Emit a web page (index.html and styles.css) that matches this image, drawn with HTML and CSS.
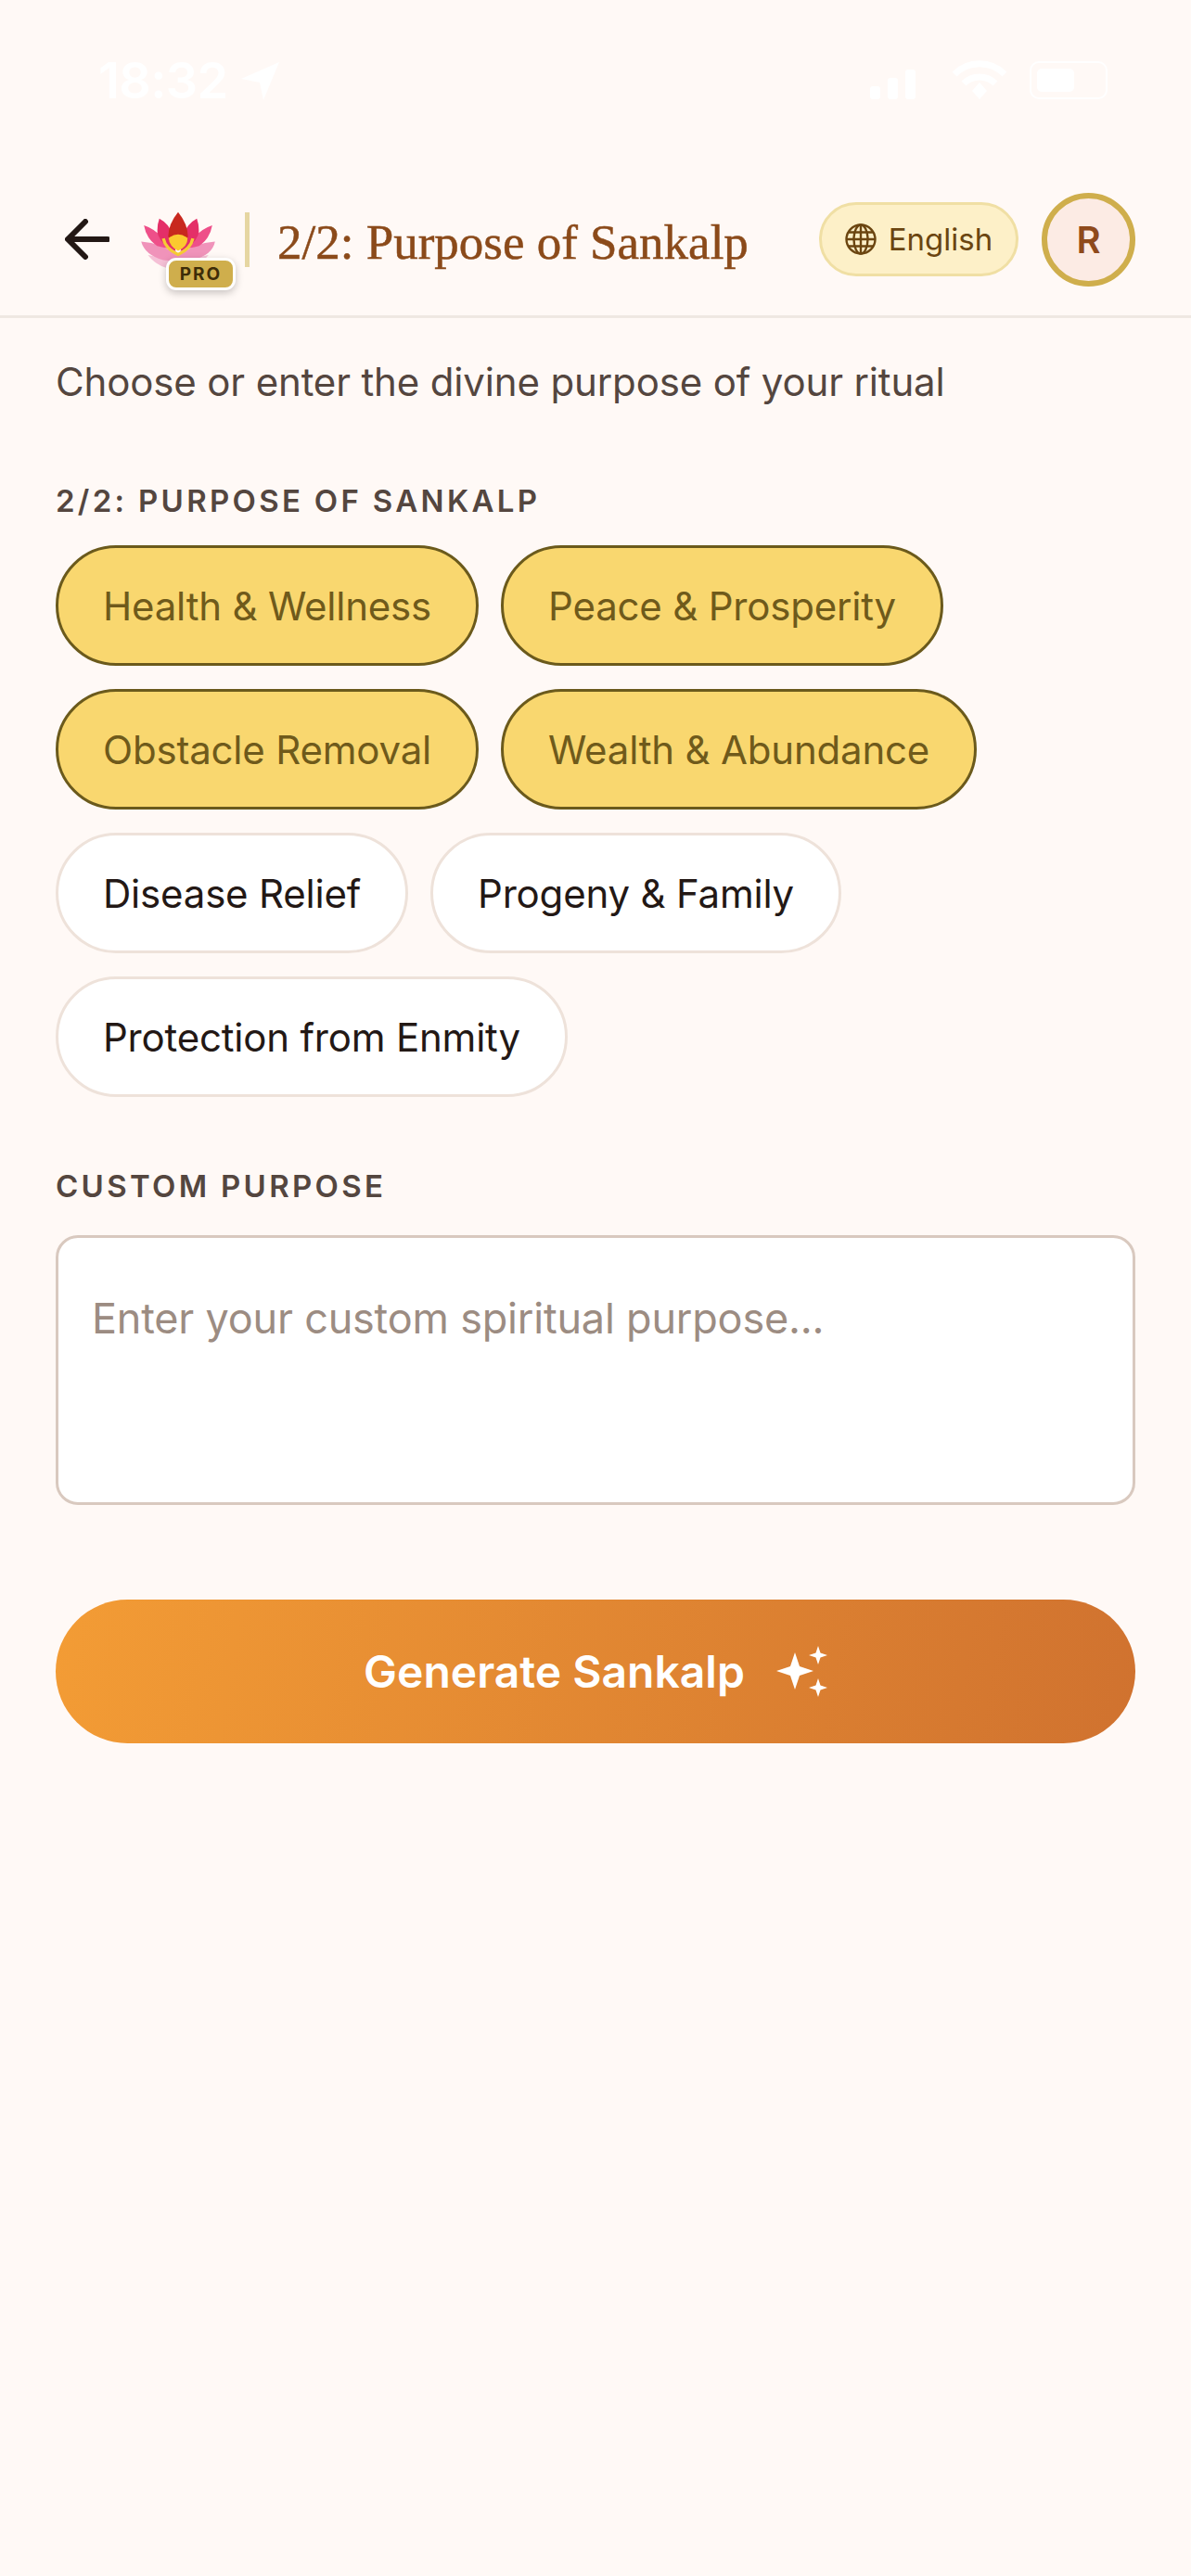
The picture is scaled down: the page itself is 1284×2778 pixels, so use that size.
FILE: index.html
```html
<!DOCTYPE html>
<html lang="en">
<head>
    <meta charset="UTF-8">
    <meta name="viewport" content="width=device-width, initial-scale=1.0">
    <title>Purpose of Sankalp</title>
    <link rel="stylesheet" href="styles.css">
</head>
<body>
    <div class="status-bar">
        <div class="status-left">
            <span class="status-time">18:32</span>
            <svg class="status-arrow" viewBox="0 0 41 41"><path d="M41 0 L24 41 L20 22 L0 18 Z" fill="#fff"/></svg>
        </div>
        <div class="status-right">
            <svg class="status-signal" viewBox="0 0 50 32">
                <rect x="0" y="18" width="11" height="14" rx="3" fill="#fff"/>
                <rect x="19" y="9" width="11" height="23" rx="3" fill="#fff"/>
                <rect x="38" y="0" width="11" height="32" rx="3" fill="#fff"/>
            </svg>
            <svg class="status-wifi" viewBox="0 0 60 42">
                <path d="M3 15 A38 38 0 0 1 57 15" fill="none" stroke="#fff" stroke-width="7"/>
                <path d="M13 25 A24 24 0 0 1 47 25" fill="none" stroke="#fff" stroke-width="7"/>
                <path d="M22 33 L30 24 L38 33 L30 42 Z" fill="#fff"/>
            </svg>
            <div class="status-battery"><div class="status-battery-fill"></div></div>
        </div>
    </div>

    <header class="header">
        <button class="back-btn" aria-label="Back">
            <svg viewBox="0 0 48 44" width="48" height="44"><path d="M46 22 H4 M22 3 L3 22 L22 41" fill="none" stroke="#231815" stroke-width="6" stroke-linecap="round" stroke-linejoin="round"/></svg>
        </button>
        <div class="logo">
            <svg viewBox="330 110 246 190" width="82" height="63">
                <path d="M355 252 Q410 262 453 275 Q496 262 552 252 Q520 292 453 300 Q390 298 355 252 Z" fill="#f5c0d6"/>
                <path d="M333 208 Q400 212 453 255 Q506 212 573 208 Q565 252 500 268 Q453 275 405 268 Q345 252 333 208 Z" fill="#f093ba"/>
                <path d="M342 155 Q395 172 425 232 L385 222 Q350 200 342 155 Z" fill="#ee4f89"/>
                <path d="M564 155 Q511 172 481 232 L521 222 Q556 200 564 155 Z" fill="#ee4f89"/>
                <path d="M392 133 Q425 150 438 190 L445 240 Q398 222 386 180 Q384 155 392 133 Z" fill="#e42f68"/>
                <path d="M514 133 Q481 150 468 190 L461 240 Q508 222 520 180 Q522 155 514 133 Z" fill="#e42f68"/>
                <path d="M453 112 Q484 150 485 190 Q480 225 453 235 Q426 225 421 190 Q422 150 453 112 Z" fill="#c8281e"/>
                <path d="M405 198 Q412 232 453 250 Q494 232 501 198" fill="none" stroke="#f6cb35" stroke-width="10"/>
                <path d="M422 197 Q453 172 484 197 Q484 225 453 238 Q425 225 422 197 Z" fill="#fbc92f"/>
            </svg>
            <span class="pro-badge">PRO</span>
        </div>
        <div class="header-divider"></div>
        <h1 class="header-title">2/2: Purpose of Sankalp</h1>
        <button class="lang-pill">
            <svg viewBox="0 0 34 34" width="34" height="34" fill="none" stroke="#6b4510" stroke-width="2.4">
                <circle cx="17" cy="17" r="15.5"/>
                <ellipse cx="17" cy="17" rx="7.5" ry="15.5"/>
                <path d="M17 1.5 V32.5 M1.5 17 H32.5 M4 9.5 H30 M4 24.5 H30"/>
            </svg>
            <span>English</span>
        </button>
        <div class="avatar">R</div>
    </header>

    <main class="content">
        <p class="intro">Choose or enter the divine purpose of your ritual</p>

        <h2 class="section-label">2/2: Purpose of Sankalp</h2>
        <div class="chips">
            <button class="chip selected">Health &amp; Wellness</button>
            <button class="chip selected">Peace &amp; Prosperity</button>
            <button class="chip selected">Obstacle Removal</button>
            <button class="chip selected">Wealth &amp; Abundance</button>
            <button class="chip">Disease Relief</button>
            <button class="chip">Progeny &amp; Family</button>
            <button class="chip">Protection from Enmity</button>
        </div>

        <h2 class="section-label custom-label">Custom Purpose</h2>
        <textarea class="custom-input" placeholder="Enter your custom spiritual purpose..."></textarea>

        <button class="generate-btn">
            <span>Generate Sankalp</span>
            <svg viewBox="0 0 55 55" width="55" height="55" fill="#fff">
                <path d="M20 7 L25 22 L40 27 L25 32 L20 47 L15 32 L0 27 L15 22 Z"/>
                <path d="M45 0 L47.5 7.5 L55 10 L47.5 12.5 L45 20 L42.5 12.5 L35 10 L42.5 7.5 Z"/>
                <path d="M45 35 L47.5 42.5 L55 45 L47.5 47.5 L45 55 L42.5 47.5 L35 45 L42.5 42.5 Z"/>
            </svg>
        </button>
    </main>
</body>
</html>
```

FILE: styles.css
```css
* {
    box-sizing: border-box;
}
body {
    margin: 0;
    min-height: 2778px;
    background-color: #fff9f6;
    font-family: Inter, "Liberation Sans", sans-serif;
    color: #231815;
}
button {
    font-family: inherit;
    cursor: pointer;
}

/* status bar, white on the page colour */
.status-bar {
    height: 177px;
    padding: 62px 90px 0 106px;
    display: flex;
    justify-content: space-between;
    align-items: flex-start;
}
.status-left {
    display: flex;
    align-items: center;
    gap: 14px;
}
.status-time {
    color: #fff;
    font-size: 54px;
    line-height: 50px;
    font-weight: 600;
    letter-spacing: -0.6px;
}
.status-arrow {
    width: 41px;
    height: 41px;
}
.status-right {
    display: flex;
    align-items: flex-end;
    padding-top: 3px;
}
.status-signal {
    width: 50px;
    height: 32px;
    margin-right: 38px;
}
.status-wifi {
    width: 60px;
    height: 42px;
    margin-right: 24px;
}
.status-battery {
    width: 84px;
    height: 41px;
    padding: 6px;
    border: 2px solid #fff;
    border-radius: 10px;
}
.status-battery-fill {
    width: 40px;
    height: 100%;
    background-color: #fff;
    border-radius: 5px;
}

/* header */
.header {
    height: 166px;
    padding: 0 60px 1px 70px;
    display: flex;
    align-items: center;
    border-bottom: 3px solid #efe8e2;
}
.back-btn {
    padding: 0;
    border: none;
    background: none;
    display: flex;
    margin-right: 33px;
}
.logo {
    position: relative;
    width: 82px;
    height: 63px;
    margin-top: 2px;
    margin-right: 31px;
}
.logo svg {
    display: block;
}
.pro-badge {
    position: absolute;
    left: 28px;
    top: 50px;
    width: 75px;
    height: 35px;
    background-color: #cfae4c;
    border: 3px solid #fff;
    border-radius: 11px;
    box-shadow: 0 3px 8px rgba(0,0,0,0.22);
    color: #3d2c08;
    font-size: 19px;
    font-weight: 700;
    letter-spacing: 2px;
    line-height: 29px;
    text-align: center;
}
.header-divider {
    width: 5px;
    height: 59px;
    background-color: #e6d6a2;
    margin-right: 30px;
}
.header-title {
    flex: 1;
    margin: 0;
    padding-top: 5px;
    color: #8b4a1a;
    font-family: "Liberation Serif", serif;
    font-size: 53px;
    font-weight: 400;
    -webkit-text-stroke: 0.5px #8b4a1a;
    white-space: nowrap;
}
.lang-pill {
    width: 215px;
    height: 80px;
    margin-right: 25px;
    padding: 0;
    display: flex;
    align-items: center;
    justify-content: center;
    gap: 13px;
    background-color: #fdf0c8;
    border: 3px solid #f0dfa4;
    border-radius: 40px;
    color: #6b4510;
    font-size: 33px;
}
.avatar {
    width: 101px;
    height: 101px;
    display: flex;
    align-items: center;
    justify-content: center;
    background-color: #fcebe4;
    border: 6px solid #cfae4c;
    border-radius: 50%;
    color: #8f4a1c;
    font-size: 40px;
    font-weight: 600;
}

/* form */
.content {
    padding: 0 60px;
}
.intro {
    margin: 44px 0 0;
    color: #54463f;
    font-size: 42px;
    line-height: 50px;
    letter-spacing: -0.15px;
}
.section-label {
    margin: 83px 0 0;
    color: #54463f;
    font-size: 33px;
    line-height: 40px;
    font-weight: 600;
    letter-spacing: 3.3px;
    text-transform: uppercase;
}
.chips {
    margin-top: 28px;
    display: flex;
    flex-wrap: wrap;
    gap: 25px 24px;
}
.chip {
    height: 130px;
    padding: 0 48px;
    background-color: #fff;
    border: 3px solid #eee2da;
    border-radius: 65px;
    color: #231815;
    font-size: 42px;
    letter-spacing: -0.2px;
}
.chip.selected {
    background-color: #f9d76f;
    border-color: #6b5a1c;
    color: #6f5a1b;
}
.custom-label {
    margin-top: 76px;
}
.custom-input {
    display: block;
    width: 100%;
    height: 291px;
    margin-top: 33px;
    padding: 62px 36px 20px;
    background-color: #fff;
    border: 3px solid #d9c9bf;
    border-radius: 24px;
    font-family: inherit;
    font-size: 45px;
    line-height: 50px;
    letter-spacing: -0.2px;
    color: #231815;
    resize: none;
    outline: none;
}
.custom-input::placeholder {
    color: #9c8c82;
    opacity: 1;
}
.generate-btn {
    width: 100%;
    height: 155px;
    margin-top: 102px;
    display: flex;
    align-items: center;
    justify-content: center;
    gap: 34px;
    border: none;
    border-radius: 78px;
    background: linear-gradient(100deg, #f39c35 0%, #d0722f 100%);
    color: #fff;
    font-size: 48px;
    font-weight: 600;
}
```
